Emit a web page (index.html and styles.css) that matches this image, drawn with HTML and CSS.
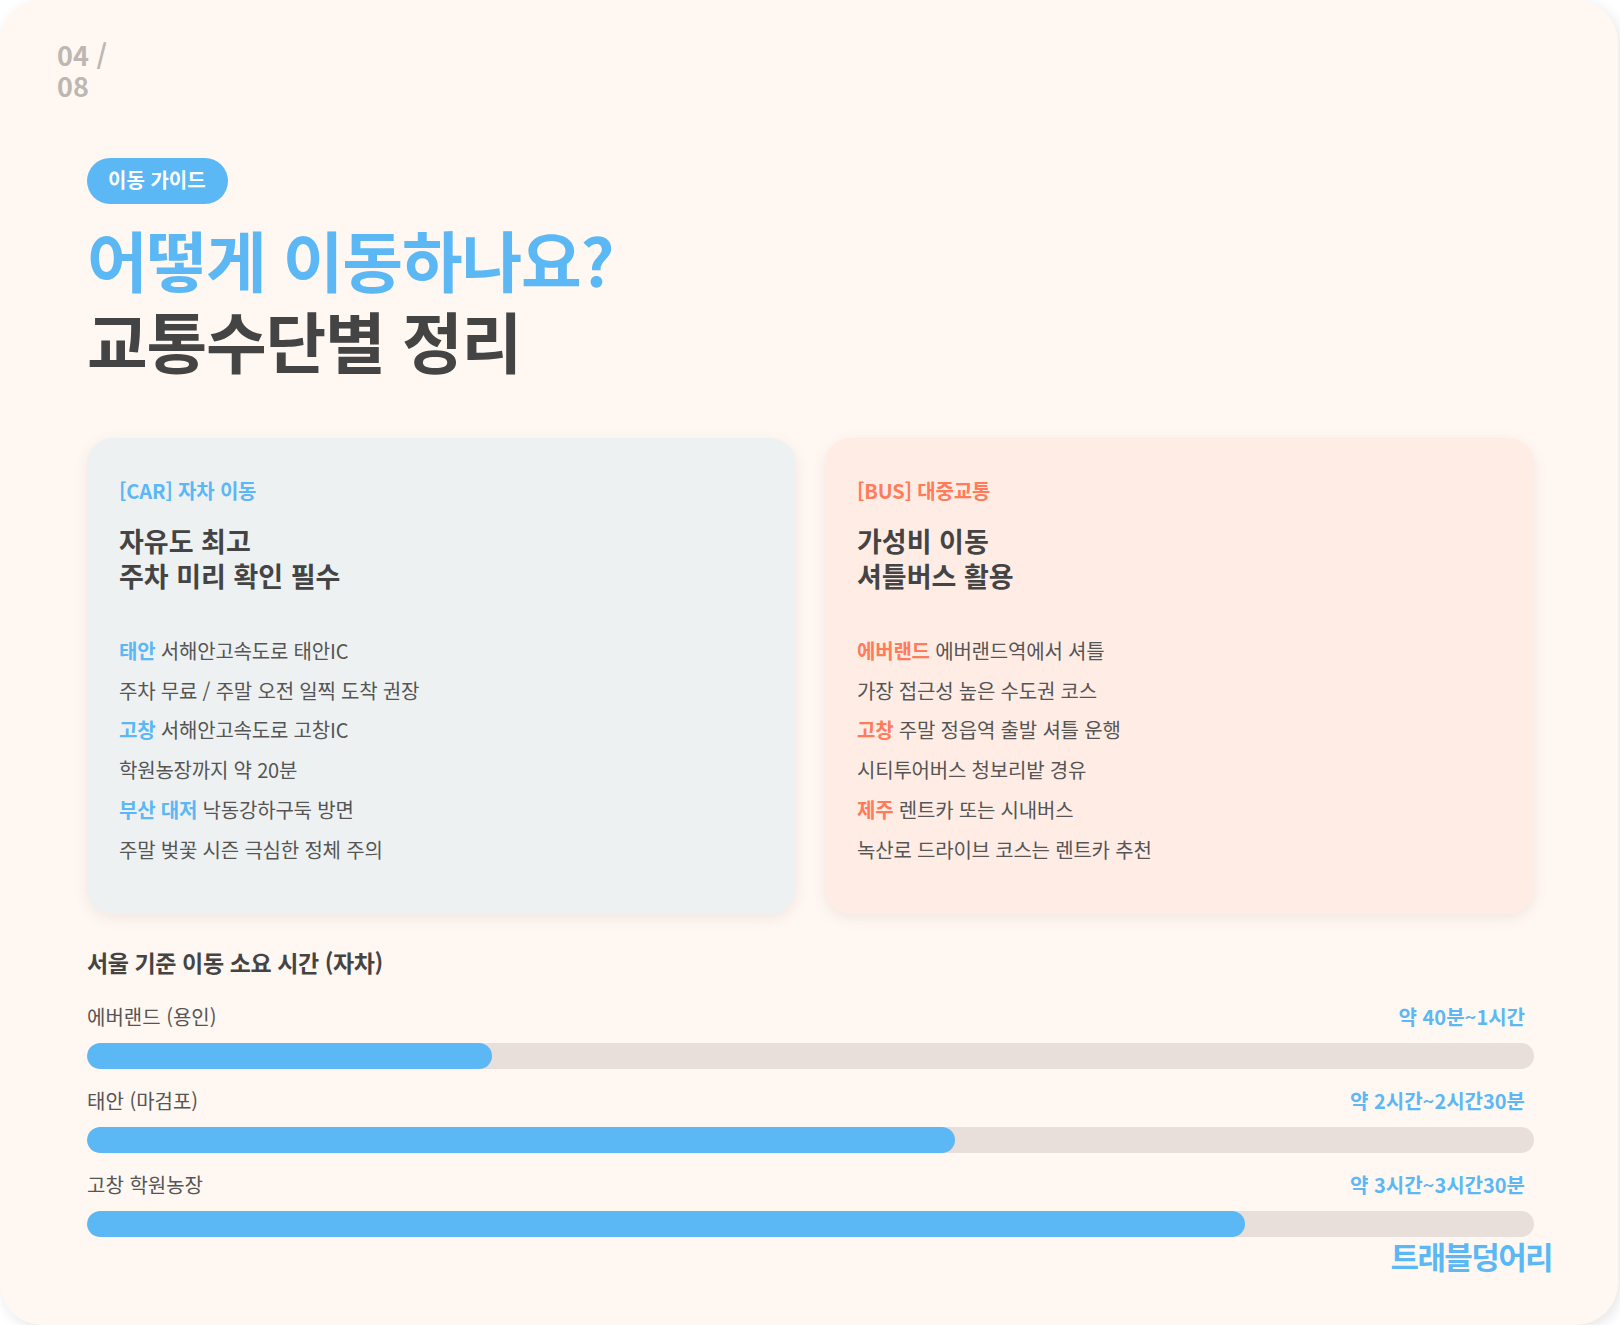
FILE: index.html
```html
<!DOCTYPE html>
<html lang="ko">
<head>
<meta charset="utf-8">
<title>이동 가이드</title>
<link rel="stylesheet" href="styles.css">
</head>
<body>
<main class="slide">
  <div class="page-num">04 / 08</div>

  <header class="hero">
    <span class="pill">이동 가이드</span>
    <h1 class="headline">
      <span class="headline-accent">어떻게 이동하나요?</span>
      <span class="headline-main">교통수단별 정리</span>
    </h1>
  </header>

  <section class="cards">
    <article class="card card-car">
      <div class="card-tag">[CAR] 자차 이동</div>
      <h2 class="card-title"><span>자유도 최고</span><span>주차 미리 확인 필수</span></h2>
      <ul class="card-list">
        <li><b>태안</b> 서해안고속도로 태안IC</li>
        <li>주차 무료 / 주말 오전 일찍 도착 권장</li>
        <li><b>고창</b> 서해안고속도로 고창IC</li>
        <li>학원농장까지 약 20분</li>
        <li><b>부산 대저</b> 낙동강하구둑 방면</li>
        <li>주말 벚꽃 시즌 극심한 정체 주의</li>
      </ul>
    </article>
    <article class="card card-bus">
      <div class="card-tag">[BUS] 대중교통</div>
      <h2 class="card-title"><span>가성비 이동</span><span>셔틀버스 활용</span></h2>
      <ul class="card-list">
        <li><b>에버랜드</b> 에버랜드역에서 셔틀</li>
        <li>가장 접근성 높은 수도권 코스</li>
        <li><b>고창</b> 주말 정읍역 출발 셔틀 운행</li>
        <li>시티투어버스 청보리밭 경유</li>
        <li><b>제주</b> 렌트카 또는 시내버스</li>
        <li>녹산로 드라이브 코스는 렌트카 추천</li>
      </ul>
    </article>
  </section>

  <section class="times">
    <h3 class="times-title">서울 기준 이동 소요 시간 (자차)</h3>
    <div class="rows">
      <div class="row">
        <div class="row-head"><span class="row-name">에버랜드 (용인)</span><span class="row-value">약 40분~1시간</span></div>
        <div class="track"><div class="fill" style="width:28%"></div></div>
      </div>
      <div class="row">
        <div class="row-head"><span class="row-name">태안 (마검포)</span><span class="row-value">약 2시간~2시간30분</span></div>
        <div class="track"><div class="fill" style="width:60%"></div></div>
      </div>
      <div class="row">
        <div class="row-head"><span class="row-name">고창 학원농장</span><span class="row-value">약 3시간~3시간30분</span></div>
        <div class="track"><div class="fill" style="width:80%"></div></div>
      </div>
    </div>
  </section>

  <div class="brand">트래블덩어리</div>
</main>
</body>
</html>
```

FILE: styles.css
```css
* { box-sizing: border-box; }

html, body {
  margin: 0;
  padding: 0;
  background: #ffffff;
}

body {
  font-family: "Noto Sans CJK KR", "Noto Sans", sans-serif;
  color: #555555;
}

.slide {
  position: relative;
  width: 1618px;
  height: 1325px;
  background: #fff7f2;
  border-radius: 42px;
  box-shadow: 3px 4px 14px rgba(0, 0, 0, 0.10);
  padding: 39px 84px 0 87px;
  overflow: hidden;
}

.page-num {
  width: 60px;
  margin-left: -30px;
  font-size: 27px;
  line-height: 31px;
  font-weight: 700;
  color: #bdb6b1;
}

.hero {
  margin-top: 57px;
}

.pill {
  display: inline-block;
  height: 46px;
  line-height: 44px;
  padding: 0 22px 0 21px;
  border-radius: 23px;
  background: #5cb8f5;
  color: #ffffff;
  font-size: 20px;
  font-weight: 700;
}

.headline {
  margin: 14px 0 0 0;
  font-size: 66px;
  line-height: 81px;
  font-weight: 700;
  letter-spacing: -1.2px;
}

.headline span { display: block; }

.headline-accent { color: #5cb8f5; }
.headline-main { color: #444444; }

.cards {
  margin-top: 58px;
  display: grid;
  grid-template-columns: 1fr 1fr;
  gap: 29px;
}

.card {
  height: 476px;
  border-radius: 26px;
  padding: 41px 32px 0 32px;
  box-shadow: 0 4px 14px rgba(120, 100, 90, 0.10);
}

.card-car { background: #eef1f2; }
.card-bus { background: #ffede5; }

.card-tag {
  font-size: 20px;
  line-height: 24px;
  font-weight: 700;
  letter-spacing: -0.2px;
}

.card-car .card-tag,
.card-car .card-list b { color: #5cb8f5; }
.card-bus .card-tag,
.card-bus .card-list b { color: #ff7b5a; }

.card-title {
  margin: 20px 0 0 0;
  font-size: 27px;
  line-height: 35px;
  font-weight: 700;
  color: #444444;
}

.card-title span { display: block; }

.card-list {
  list-style: none;
  margin: 38px 0 0 0;
  padding: 0;
}

.card-list li {
  font-size: 20px;
  line-height: 39.7px;
  letter-spacing: -0.2px;
  color: #555555;
}

.card-list b { font-weight: 700; }

.times {
  margin-top: 33px;
}

.times-title {
  margin: 0;
  font-size: 23px;
  line-height: 30px;
  font-weight: 700;
  color: #444444;
  letter-spacing: -0.4px;
}

.rows {
  margin-top: 25px;
  display: flex;
  flex-direction: column;
  gap: 17px;
}

.row-head {
  display: flex;
  justify-content: space-between;
  align-items: center;
  height: 28px;
  padding-right: 9px;
  font-size: 20px;
}

.row-name { color: #555555; }

.row-value {
  color: #5cb8f5;
  font-weight: 700;
}

.track {
  margin-top: 13px;
  height: 26px;
  border-radius: 13px;
  background: #e8dfda;
  overflow: hidden;
}

.fill {
  height: 100%;
  border-radius: 13px;
  background: #5cb8f5;
}

.brand {
  position: absolute;
  right: 66px;
  top: 1234px;
  font-size: 31px;
  line-height: 44px;
  font-weight: 700;
  color: #5cb8f5;
  letter-spacing: -1.6px;
}
```
